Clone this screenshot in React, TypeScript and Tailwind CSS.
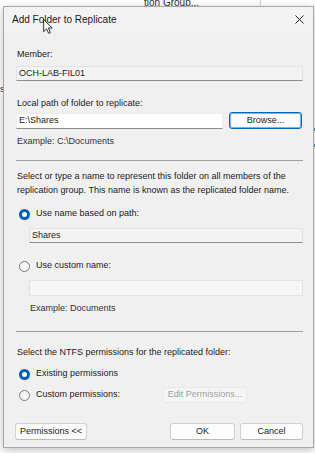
import React from "react";

const font = { fontFamily: '"Liberation Sans", Arial, sans-serif' };

function Radio({ checked }: { checked?: boolean }) {
  return checked ? (
    <span className="flex h-[11px] w-[11px] shrink-0 items-center justify-center rounded-full bg-[#005fb8]">
      <span className="h-[5px] w-[5px] rounded-full bg-white" />
    </span>
  ) : (
    <span className="h-[11px] w-[11px] shrink-0 rounded-full border border-[#7a7a7a] bg-[#f7f7f7]" />
  );
}

function Btn({ children, className = "" }: { children: React.ReactNode; className?: string }) {
  return (
    <button
      className={`flex h-[17px] items-center justify-center rounded-[3px] border border-[#d0d0d0] border-b-[#bcbcbc] bg-[#fdfdfd] text-[9px] text-[#1b1b1b] ${className}`}
    >
      {children}
    </button>
  );
}

export default function App() {
  return (
    <div className="relative h-[453px] w-[315px] overflow-hidden bg-white" style={font}>
      {/* bits of the window behind the dialog */}
      <div className="absolute left-[144px] top-[-3px] text-[10px] leading-[12px] text-[#333]">tion Group...</div>
      <div className="absolute left-[260px] top-0 h-[8px] w-px bg-[#d8d8d8]" />
      <div className="absolute left-[0px] top-[84px] text-[9px] leading-[10px] text-[#333]">s</div>
      <div className="absolute left-[313px] top-[128px] h-[3px] w-[2px] bg-[#3d8ad6]" />
      <div className="absolute left-[313px] top-[144px] h-[3px] w-[2px] bg-[#3d8ad6]" />

      <div className="absolute left-[3px] top-[6px] flex h-[442px] w-[311px] flex-col border border-[#a8a8a8] bg-[#f0f0f0] shadow-[0_2px_8px_rgba(0,0,0,0.25)]">
        {/* title bar */}
        <div className="flex h-[25px] shrink-0 items-center justify-between bg-[#f3f3f3] pl-[8px] pr-[8px]">
          <span className="text-[10px] text-[#1b1b1b]">Add Folder to Replicate</span>
          <svg width="9" height="9" viewBox="0 0 9 9" className="mr-[1px]">
            <path d="M0.5 0.5 L8.5 8.5 M8.5 0.5 L0.5 8.5" stroke="#222" strokeWidth="1" />
          </svg>
        </div>

        <div className="flex flex-col pl-[12px] pr-[10px] text-[9px] text-[#1b1b1b]">
          <div className="mt-[16px] h-[12px] pl-[1px] leading-[12px]">Member:</div>
          <div className="mt-[6px] flex h-[15px] items-center border border-[#e3e3e3] border-b-[#8d8d8d] bg-[#f3f3f3] pl-[2px]">
            OCH-LAB-FIL01
          </div>

          <div className="mt-[16px] h-[12px] pl-[1px] leading-[12px]">Local path of folder to replicate:</div>
          <div className="mt-[3px] flex h-[17px] items-center gap-[6px]">
            <div className="flex h-[16px] w-[207px] items-center border border-[#ececec] border-b-[#8d8d8d] bg-white pl-[2px]">
              E:\Shares
            </div>
            <button className="flex h-[17px] w-[73px] items-center justify-center rounded-[3px] border border-[#0067c0] bg-[#fdfdfd] text-[9px] text-[#1b1b1b] shadow-[inset_0_0_0_1px_#7fb2e6]">
              Browse...
            </button>
          </div>
          <div className="mt-[6px] h-[12px] pl-[1px] leading-[12px] text-[#333]">Example: C:\Documents</div>

          <div className="mt-[13px] h-px bg-[#a0a0a0]" />

          <div className="mt-[8px] pl-[1px] leading-[14px]">
            Select or type a name to represent this folder on all members of the
            <br />
            replication group. This name is known as the replicated folder name.
          </div>

          <div className="mt-[10px] flex h-[14px] items-center gap-[6px] pl-[3px]">
            <Radio checked />
            <span>Use name based on path:</span>
          </div>
          <div className="ml-[13px] mt-[7px] flex h-[15px] items-center border border-[#e3e3e3] border-b-[#8d8d8d] bg-[#f3f3f3] pl-[2px]">
            Shares
          </div>

          <div className="mt-[16px] flex h-[14px] items-center gap-[6px] pl-[3px]">
            <Radio />
            <span>Use custom name:</span>
          </div>
          <div className="ml-[13px] mt-[7px] h-[16px] border border-[#e3e3e3] bg-[#f5f5f5]" />
          <div className="ml-[14px] mt-[6px] h-[12px] leading-[12px] text-[#333]">Example: Documents</div>

          <div className="mt-[17px] h-px bg-[#a0a0a0]" />

          <div className="mt-[14px] h-[12px] pl-[1px] leading-[12px]">Select the NTFS permissions for the replicated folder:</div>
          <div className="mt-[9px] flex h-[14px] items-center gap-[6px] pl-[3px]">
            <Radio checked />
            <span>Existing permissions</span>
          </div>
          <div className="mt-[6px] flex h-[16px] items-center pl-[3px]">
            <Radio />
            <span className="ml-[6px] w-[127px]">Custom permissions:</span>
            <div className="flex h-[16px] w-[84px] items-center justify-center rounded-[3px] border border-[#e8e8e8] bg-[#f5f5f5] text-[#a0a0a0]">
              Edit Permissions...
            </div>
          </div>

          <div className="mt-[20px] flex h-[17px] items-center">
            <Btn className="ml-[-1px] w-[72px]">Permissions &lt;&lt;</Btn>
            <div className="flex-1" />
            <Btn className="w-[65px]">OK</Btn>
            <Btn className="ml-[5px] w-[63px]">Cancel</Btn>
          </div>
        </div>
      </div>

      {/* mouse pointer */}
      <svg className="absolute left-[43px] top-[19px]" width="10" height="15" viewBox="0 0 12 19">
        <path d="M0.5 0.5 L0.5 16 L4.2 12.4 L6.8 18.2 L9 17.2 L6.5 11.5 L11.3 11.5 Z" fill="white" stroke="black" strokeWidth="1" strokeLinejoin="round" />
      </svg>
    </div>
  );
}
